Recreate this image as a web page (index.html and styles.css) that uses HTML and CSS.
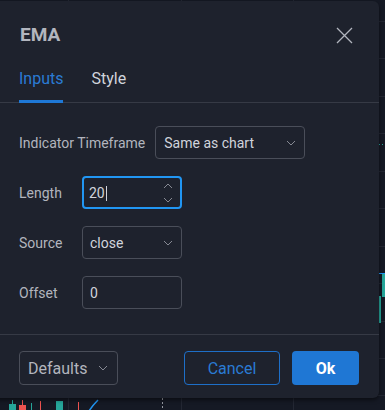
FILE: index.html
```html
<!DOCTYPE html>
<html lang="en">
<head>
    <meta charset="UTF-8">
    <meta name="viewport" content="width=device-width, initial-scale=1.0">
    <title>EMA</title>
    <link rel="stylesheet" href="styles.css">
</head>
<body>
    <!-- the chart behind the dialog -->
    <svg class="chart" width="385" height="410" viewBox="0 0 385 410">
        <g stroke="#232733" stroke-width="1">
            <line x1="68.5" y1="0" x2="68.5" y2="410"/>
            <line x1="181.5" y1="0" x2="181.5" y2="410"/>
            <line x1="293.5" y1="0" x2="293.5" y2="410"/>
            <line x1="0" y1="21.5" x2="385" y2="21.5"/>
            <line x1="0" y1="58.5" x2="385" y2="58.5"/>
            <line x1="0" y1="96.5" x2="385" y2="96.5"/>
            <line x1="0" y1="133.5" x2="385" y2="133.5"/>
            <line x1="0" y1="171.5" x2="385" y2="171.5"/>
            <line x1="0" y1="208.5" x2="385" y2="208.5"/>
            <line x1="0" y1="246.5" x2="385" y2="246.5"/>
            <line x1="0" y1="283.5" x2="385" y2="283.5"/>
            <line x1="0" y1="321.5" x2="385" y2="321.5"/>
            <line x1="0" y1="358.5" x2="385" y2="358.5"/>
            <line x1="0" y1="395.5" x2="385" y2="395.5"/>
        </g>
        <line x1="379" y1="144.5" x2="385" y2="144.5" stroke="#26a69a" stroke-dasharray="1 2"/>
        <line x1="379" y1="273.5" x2="385" y2="273.5" stroke="#2196f3"/>
        <rect x="382" y="274" width="3" height="23" fill="#26a69a"/>
        <rect x="379" y="296" width="2" height="27" fill="#26a69a"/>

        <line x1="12.5" y1="400" x2="12.5" y2="404" stroke="#26a69a"/>
        <rect x="9" y="404" width="7" height="6" fill="#26a69a"/>
        <line x1="22.5" y1="400" x2="22.5" y2="405" stroke="#ef5350"/>
        <rect x="19" y="405" width="7" height="5" fill="#ef5350"/>
        <line x1="31.5" y1="403" x2="31.5" y2="410" stroke="#26a69a"/>
        <line x1="40.5" y1="401" x2="40.5" y2="410" stroke="#ef5350"/>
        <rect x="56" y="401" width="7" height="9" fill="#26a69a"/>
        <line x1="78.5" y1="402" x2="78.5" y2="410" stroke="#ef5350"/>
        <path d="M89 411 Q93 405 98 400" stroke="#2196f3" stroke-width="1.5" fill="none"/>
        <line x1="162.5" y1="398" x2="162.5" y2="410" stroke="#9598a1" stroke-dasharray="2 2"/>
    </svg>

    <div class="dialog">
        <div class="header">
            <div class="title">EMA</div>
            <svg class="close" width="17" height="17" viewBox="0 0 17 17">
                <path d="M1 1L16 16M16 1L1 16" stroke="#b2b5be" stroke-width="1.3" fill="none"/>
            </svg>
        </div>

        <div class="tabs">
            <div class="tab tab-active">Inputs</div>
            <div class="tab">Style</div>
        </div>

        <div class="content">
            <div class="row">
                <div class="label">Indicator Timeframe</div>
                <div class="field field-wide">
                    <span>Same as chart</span>
                    <svg class="chevron" width="10" height="6" viewBox="0 0 10 6"><path d="M1 1l4 4 4-4" stroke="#868993" fill="none"/></svg>
                </div>
            </div>
            <div class="row">
                <div class="label label-short">Length</div>
                <div class="field field-focus">
                    <span>20<span class="caret"></span></span>
                    <div class="spinner">
                        <svg width="10" height="6" viewBox="0 0 10 6"><path d="M1 5l4-4 4 4" stroke="#868993" fill="none"/></svg>
                        <svg width="10" height="6" viewBox="0 0 10 6"><path d="M1 1l4 4 4-4" stroke="#868993" fill="none"/></svg>
                    </div>
                </div>
            </div>
            <div class="row">
                <div class="label label-short">Source</div>
                <div class="field">
                    <span>close</span>
                    <svg class="chevron" width="10" height="6" viewBox="0 0 10 6"><path d="M1 1l4 4 4-4" stroke="#868993" fill="none"/></svg>
                </div>
            </div>
            <div class="row">
                <div class="label label-short">Offset</div>
                <div class="field">
                    <span>0</span>
                </div>
            </div>
        </div>

        <div class="footer">
            <div class="button button-defaults">
                <span>Defaults</span>
                <svg class="chevron" width="10" height="6" viewBox="0 0 10 6"><path d="M1 1l4 4 4-4" stroke="#868993" fill="none"/></svg>
            </div>
            <div class="footer-right">
                <div class="button button-cancel">Cancel</div>
                <div class="button button-ok">Ok</div>
            </div>
        </div>
    </div>
</body>
</html>
```

FILE: styles.css
```css
* {
    margin: 0;
    padding: 0;
    box-sizing: border-box;
}

body {
    width: 385px;
    height: 410px;
    background-color: #151924;
    font-family: Roboto, "Liberation Sans", sans-serif;
    color: #d1d4dc;
    position: relative;
    overflow: hidden;
}

.chart {
    position: absolute;
    top: 0;
    left: 0;
    display: block;
}

.dialog {
    position: absolute;
    top: 1px;
    left: -8px;
    width: 387px;
    background: #1e222d;
    border-radius: 6px;
    box-shadow: 0 2px 4px rgba(0, 0, 0, 0.5);
}

.header {
    display: flex;
    align-items: center;
    justify-content: space-between;
    padding: 22px 26px 0 28px;
}

.title {
    font-size: 19px;
    line-height: 24px;
    font-weight: 700;
    color: #b2b5be;
}

.close {
    display: block;
}

.tabs {
    display: flex;
    gap: 28px;
    margin-top: 22px;
    padding-left: 27px;
    border-bottom: 1px solid #363a45;
}

.tab {
    font-size: 16px;
    line-height: 20px;
    padding-bottom: 11px;
    border-bottom: 3px solid transparent;
    margin-bottom: -1px;
    color: #d1d4dc;
}

.tab-active {
    color: #2a7bd4;
    border-bottom-color: #1e78d6;
}

.content {
    display: flex;
    flex-direction: column;
    gap: 17px;
    padding: 23px 0 25px 27px;
    border-bottom: 1px solid #363a45;
}

.row {
    display: flex;
    align-items: center;
}

.label {
    font-size: 14px;
    color: #b2b5be;
    margin-right: 10px;
}

.label-short {
    width: 63px;
    margin-right: 0;
}

.field {
    width: 100px;
    height: 33px;
    border: 1px solid #4a4e59;
    border-radius: 4px;
    display: flex;
    align-items: center;
    justify-content: space-between;
    padding: 0 8px 0 7px;
    font-size: 14px;
    color: #d1d4dc;
}

.field-wide {
    width: 150px;
    padding-left: 8px;
}

.field-focus {
    border: 2px solid #2196f3;
    padding-left: 5px;
    padding-right: 7px;
}

.caret {
    display: inline-block;
    width: 1px;
    height: 15px;
    background: #d1d4dc;
    vertical-align: -3px;
    margin-left: 1px;
}

.spinner {
    display: flex;
    flex-direction: column;
    gap: 8px;
}

.spinner svg,
.chevron {
    display: block;
}

.footer {
    display: flex;
    justify-content: space-between;
    padding: 16px 20px 13px 27px;
}

.footer-right {
    display: flex;
    gap: 12px;
}

.button {
    height: 34px;
    border-radius: 4px;
    font-size: 16px;
    display: flex;
    align-items: center;
    justify-content: center;
}

.button-defaults {
    width: 99px;
    justify-content: space-between;
    padding: 0 9px 0 8px;
    border: 1px solid #4a4e59;
    color: #b2b5be;
}

.button-cancel {
    width: 96px;
    border: 1px solid #1e6fc8;
    color: #2a7bd4;
}

.button-ok {
    width: 67px;
    background: #1f77d4;
    color: #fff;
    font-weight: 700;
}
```
